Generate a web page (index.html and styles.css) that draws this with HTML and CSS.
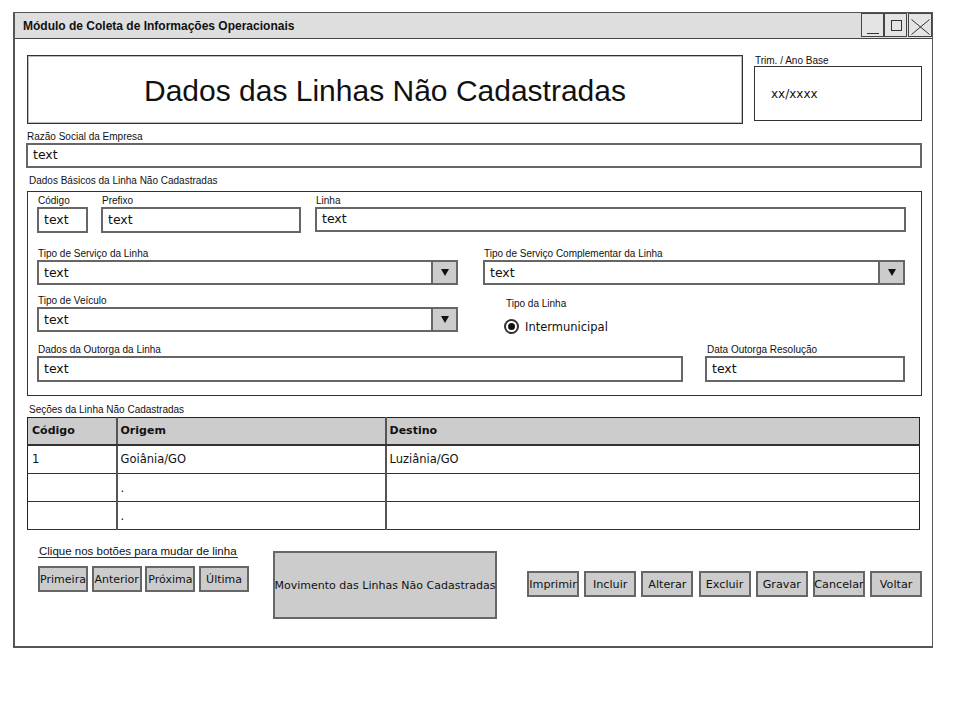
FILE: index.html
```html
<!DOCTYPE html>
<html lang="pt-BR">
<head>
<meta charset="utf-8">
<title>Módulo de Coleta de Informações Operacionais</title>
<link rel="stylesheet" href="styles.css">
</head>
<body>
<div class="window">
  <div class="titlebar">
    <span class="wtitle">Módulo de Coleta de Informações Operacionais</span>
    <div class="controls">
      <span class="ctl"><svg width="21" height="22" viewBox="0 0 21 22"><line x1="5" y1="19.5" x2="17" y2="19.5" stroke="#333" stroke-width="1"/></svg></span>
      <span class="ctl"><svg width="21" height="22" viewBox="0 0 21 22"><rect x="6.5" y="6.5" width="10" height="10" fill="none" stroke="#333" stroke-width="1"/></svg></span>
      <span class="ctl ctl-x"><svg width="22" height="22" viewBox="0 0 22 22"><path d="M2.5 5.5 L20.5 20.5 M20.5 5.5 L2.5 20.5" stroke="#333" stroke-width="1" fill="none"/></svg></span>
    </div>
  </div>
  <div class="content">
    <div class="top-row">
      <div class="headline">Dados das Linhas Não Cadastradas</div>
      <div class="trim">
        <div class="lbl">Trim. / Ano Base</div>
        <div class="trim-box">xx/xxxx</div>
      </div>
    </div>

    <div class="lbl razao-lbl">Razão Social da Empresa</div>
    <div class="input razao">text</div>

    <div class="lbl group-lbl">Dados Básicos da Linha Não Cadastradas</div>
    <div class="group">
      <div class="row row1">
        <div class="field w-codigo"><div class="lbl">Código</div><div class="input">text</div></div>
        <div class="field w-prefixo"><div class="lbl">Prefixo</div><div class="input">text</div></div>
        <div class="field w-linha"><div class="lbl">Linha</div><div class="input in-linha">text</div></div>
      </div>
      <div class="row row2">
        <div class="field w-select"><div class="lbl">Tipo de Serviço da Linha</div>
          <div class="select"><span class="sel-text">text</span><span class="sel-btn"><span class="tri"></span></span></div>
        </div>
        <div class="field w-select"><div class="lbl">Tipo de Serviço Complementar da Linha</div>
          <div class="select"><span class="sel-text">text</span><span class="sel-btn"><span class="tri"></span></span></div>
        </div>
      </div>
      <div class="row row3">
        <div class="field w-select"><div class="lbl">Tipo de Veículo</div>
          <div class="select"><span class="sel-text">text</span><span class="sel-btn"><span class="tri"></span></span></div>
        </div>
        <div class="radio-field">
          <div class="lbl">Tipo da Linha</div>
          <div class="radio"><span class="radio-dot"></span><span class="radio-text">Intermunicipal</span></div>
        </div>
      </div>
      <div class="row row4">
        <div class="field w-outorga"><div class="lbl">Dados da Outorga da Linha</div><div class="input">text</div></div>
        <div class="field w-data"><div class="lbl">Data Outorga Resolução</div><div class="input">text</div></div>
      </div>
    </div>

    <div class="lbl table-lbl">Seções da Linha Não Cadastradas</div>
    <table class="grid">
      <thead>
        <tr class="h"><th class="c1">Código</th><th class="c2">Origem</th><th class="c3">Destino</th></tr>
      </thead>
      <tbody>
        <tr class="r1"><td>1</td><td>Goiânia/GO</td><td>Luziânia/GO</td></tr>
        <tr class="r2"><td></td><td>.</td><td></td></tr>
        <tr class="r3"><td></td><td>.</td><td></td></tr>
      </tbody>
    </table>

    <div class="bottom">
      <div class="nav">
        <div class="hint">Clique nos botões para mudar de linha</div>
        <div class="nav-btns">
          <span class="btn">Primeira</span>
          <span class="btn">Anterior</span>
          <span class="btn">Próxima</span>
          <span class="btn">Última</span>
        </div>
      </div>
      <span class="btn big">Movimento das Linhas Não Cadastradas</span>
      <div class="actions">
        <span class="btn act">Imprimir</span>
        <span class="btn act">Incluir</span>
        <span class="btn act">Alterar</span>
        <span class="btn act">Excluir</span>
        <span class="btn act">Gravar</span>
        <span class="btn act">Cancelar</span>
        <span class="btn act">Voltar</span>
      </div>
    </div>
  </div>
</div>
</body>
</html>
```
FILE: styles.css
```css
* { box-sizing: border-box; }

body {
  margin: 0;
  background: #fff;
  font-family: "Liberation Sans", Arial, sans-serif;
  color: #111;
}

.window {
  margin: 12px 0 0 13px;
  width: 920px;
  height: 636px;
  border-style: solid;
  border-color: #555;
  border-width: 1px 1px 2px 2px;
  background: #fff;
}

.titlebar {
  height: 26px;
  background: #dedede;
  border-bottom: 1px solid #444;
  display: flex;
  align-items: center;
  justify-content: space-between;
}

.wtitle {
  font-weight: bold;
  font-size: 12px;
  margin-left: 8px;
  margin-top: 1px;
}

.controls {
  display: flex;
  align-self: flex-start;
}

.ctl {
  width: 23px;
  height: 24px;
  border: 1px solid #444;
  background: #e4e4e4;
  display: flex;
}
.ctl-x { margin-left: 1px; width: 24px; }

.content {
  padding-left: 12px;
}

.lbl {
  font-size: 10px;
  line-height: 12px;
  white-space: nowrap;
}

.top-row {
  display: flex;
  margin-top: 16px;
}

.headline {
  width: 716px;
  height: 69px;
  border: 1px solid #333;
  box-shadow: inset 0 0 0 1px #bbb;
  display: flex;
  align-items: center;
  justify-content: center;
  font-size: 30px;
  padding-top: 3px;
}

.trim {
  margin-left: 11px;
}
.trim .lbl { margin-left: 1px; height: 11px; line-height: 11px; }
.trim-box {
  width: 168px;
  height: 55px;
  border: 1px solid #333;
  font-family: "DejaVu Sans", sans-serif;
  font-size: 12px;
  padding: 20px 0 0 16px;
}

.razao-lbl { margin-top: 7px; }

.input {
  height: 26px;
  border: 2px solid #666;
  font-family: "DejaVu Sans", sans-serif;
  font-size: 12.5px;
  line-height: 22px;
  padding-left: 5px;
  background: #fff;
}

.razao {
  width: 896px;
  margin-left: -1px;
  height: 25px;
  line-height: 20px;
}

.group-lbl { margin-top: 7px; margin-left: 2px; }

.group {
  margin-top: 4px;
  width: 895px;
  height: 205px;
  border: 1px solid #333;
  padding: 3px 0 0 9px;
}

.row { display: flex; }
.field .lbl { margin-left: 1px; }

.w-codigo { width: 51px; }
.w-prefixo { width: 200px; margin-left: 13px; }
.w-linha { width: 591px; margin-left: 14px; }
.in-linha { height: 25px; line-height: 19px; }

.row2 { margin-top: 15px; }
.w-select { width: 421px; }
.row2 .w-select + .w-select { margin-left: 25px; width: 422px; }

.select {
  height: 25px;
  border: 2px solid #666;
  display: flex;
  background: #fff;
}
.sel-text {
  flex: 1;
  font-family: "DejaVu Sans", sans-serif;
  font-size: 12.5px;
  line-height: 21px;
  padding-left: 5px;
}
.sel-btn {
  width: 25px;
  background: #ccc;
  border-left: 2px solid #666;
  display: flex;
  align-items: center;
  justify-content: center;
}
.tri {
  width: 0;
  height: 0;
  border-left: 4px solid transparent;
  border-right: 4px solid transparent;
  border-top: 7px solid #111;
}

.row3 { margin-top: 10px; }
.radio-field { margin-left: 46px; padding-top: 3px; }
.radio-field .lbl { margin-left: 2px; }
.radio {
  display: flex;
  align-items: center;
  margin-top: 9px;
}
.radio-dot {
  width: 15px;
  height: 15px;
  border: 2px solid #333;
  border-radius: 50%;
  display: flex;
  align-items: center;
  justify-content: center;
}
.radio-dot::after {
  content: "";
  width: 7px;
  height: 7px;
  border-radius: 50%;
  background: #111;
}
.radio-text {
  margin-left: 6px;
  font-family: "DejaVu Sans", sans-serif;
  font-size: 11.5px;
}

.row4 { margin-top: 10px; }
.w-outorga { width: 646px; }
.w-data { width: 200px; margin-left: 22px; }
.w-data .lbl { margin-left: 2px; }

.table-lbl { margin-top: 8px; margin-left: 2px; }

.grid {
  width: 893px;
  border-collapse: collapse;
  border: 1px solid #222;
  font-family: "DejaVu Sans", sans-serif;
  font-size: 11.5px;
  margin-top: 1px;
}
.grid th, .grid td {
  text-align: left;
  padding: 0 0 0 3px;
  border-left: 2px solid #555;
  border-bottom: 1px solid #333;
}
.grid th:first-child, .grid td:first-child { border-left: none; padding-left: 4px; }
.grid th {
  background: #ccc;
  font-size: 11px;
  border-bottom: 2px solid #333;
}
.grid tr.h { height: 27px; }
.grid tr.r1 { height: 29px; }
.grid tr.r2 { height: 28px; }
.grid tr.r3 { height: 28px; }
.grid .c1 { width: 89px; }
.grid .c2 { width: 269px; }

.bottom {
  display: flex;
  align-items: flex-start;
  margin-top: 15px;
}

.nav {
  width: 212px;
  margin-left: 11px;
}
.hint {
  width: fit-content;
  font-size: 11.5px;
  line-height: 12px;
  padding: 0 1px;
  border-bottom: 1px solid #333;
}
.nav-btns {
  display: flex;
  gap: 3.7px;
  margin-top: 8px;
}

.btn {
  display: flex;
  align-items: center;
  justify-content: center;
  width: 50px;
  height: 26px;
  background: #ccc;
  border: 2px solid #666;
  font-family: "DejaVu Sans", sans-serif;
  font-size: 11px;
  white-space: nowrap;
}

.big {
  width: 224px;
  height: 68px;
  margin-left: 23px;
  margin-top: 6px;
  font-size: 11px;
}

.actions {
  display: flex;
  gap: 5.2px;
  margin-left: 30px;
  margin-top: 26px;
}
.act { width: 52px; font-size: 11.2px; }
```
